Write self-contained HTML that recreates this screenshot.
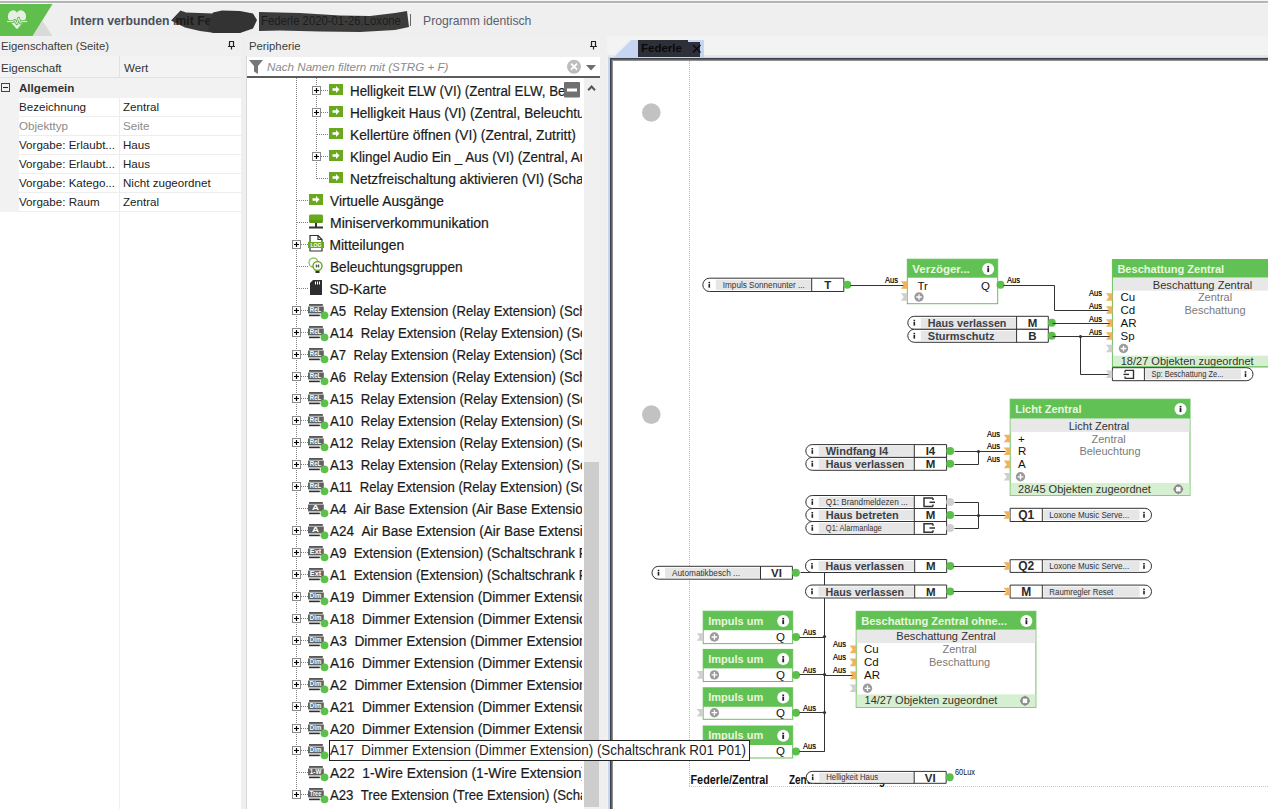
<!DOCTYPE html><html><head><meta charset="utf-8"><style>
*{margin:0;padding:0;box-sizing:border-box}
html,body{width:1268px;height:809px;overflow:hidden;background:#f0f0f0;font-family:"Liberation Sans",sans-serif;position:relative}
.a{position:absolute;white-space:nowrap}
</style></head><body>

<div class="a" style="left:0;top:0;width:1268px;height:36px;background:#efefef"></div>
<div class="a" style="left:0;top:0;width:1268px;height:1px;background:#f6f6f6"></div>
<div class="a" style="left:0;top:3px;width:1268px;height:1px;background:#f8f8f8"></div>
<div class="a" style="left:0;top:1px;width:1268px;height:2px;background:#b4b4b4"></div>
<svg class="a" style="left:0;top:0" width="120" height="40">
<polygon points="32.6,36 52.5,36 42.5,21" fill="#dadada"/>
<polygon points="0,4 52.5,4 32.6,36 0,36" fill="#60bf4c"/>
<path d="M17,29.2 L9.5,21 C7.2,18.3 7.4,13 10.8,11 C13.5,9.6 15.9,10.6 17,12.8 C18.1,10.6 20.5,9.6 23.2,11 C26.6,13 26.8,18.3 24.5,21 Z" fill="#e6efe4"/>
<polyline points="7,21.6 13,21.6 14.8,20.2 16.8,23.8 18.6,18 20.3,23.2 21.3,21.6 27.2,21.6" fill="none" stroke="#60bf4c" stroke-width="2.6" stroke-linejoin="round"/>
<polyline points="7,21.6 13,21.6 14.8,20.2 16.8,23.8 18.6,18 20.3,23.2 21.3,21.6 27.2,21.6" fill="none" stroke="#e6efe4" stroke-width="1" stroke-linejoin="round"/>
</svg>
<div class="a" style="left:70px;top:13px;font-size:12.2px;font-weight:bold;color:#4a505c;line-height:16px">Intern verbunden mit Federle</div>
<div class="a" style="left:423px;top:13px;font-size:12.2px;color:#5a6070;line-height:16px">Programm identisch</div>
<svg class="a" style="left:0;top:0" width="560" height="40">
<path d="M171,20.5 L180.5,10.5 L186,12.5 L213,13.5 L252,14 L256,20 L252,28 L240,32.5 L215,33 L200,31 L185,27.5 Z" fill="#3a3a3a"/>
<path d="M259,12 L300,13 L340,15.5 L370,16 L395,13 L407,11 L409,27 L395,30 L360,32 L320,31.5 L280,30.5 L259,31 Z" fill="#3c3c3c"/>
</svg>
<div class="a" style="left:260.5px;top:13px;font-size:12.2px;color:#1c1c1c;line-height:16px;transform:scaleX(0.93);transform-origin:0 0">Federle 2020-01-26.Loxone</div>
<div class="a" style="left:175.5px;top:13px;font-size:12.2px;font-weight:bold;color:#1c1c1c;line-height:16px">mit Federle</div>
<svg class="a" style="left:0;top:0" width="560" height="40">
<path d="M213,12.5 L222,10.5 L240,11 L253,13.5 L257,20 L253,28.5 L240,33 L213,33 L208,30 L210,20 Z" fill="#333"/>
</svg>
<div class="a" style="left:410px;top:14px;width:1px;height:12px;background:#666"></div>
<div class="a" style="left:0;top:36px;width:246px;height:773px;background:#f0f0f0"></div>
<div class="a" style="left:1px;top:38px;font-size:11.3px;color:#3c3c3c;line-height:16px">Eigenschaften (Seite)</div>
<svg class="a" style="left:227px;top:41px" width="9" height="9"><path d="M2,0.5 H7 M2.5,0.5 V5 M6.5,0.5 V5 M1,5.5 H8 M4.5,5.5 V8.5" stroke="#222" stroke-width="1.2" fill="none"/></svg>
<div class="a" style="left:0;top:56px;width:241px;height:22px;background:#f3f3f3;border-bottom:1px solid #e2e2e2"></div>
<div class="a" style="left:119px;top:56px;width:1px;height:22px;background:#e2e2e2"></div>
<div class="a" style="left:1px;top:60px;font-size:11.6px;color:#333;line-height:16px">Eigenschaft</div>
<div class="a" style="left:124px;top:60px;font-size:11.6px;color:#333;line-height:16px">Wert</div>
<div class="a" style="left:0;top:78px;width:241px;height:731px;background:#fff"></div>
<div class="a" style="left:119px;top:212px;width:1px;height:597px;background:#f0f0f0"></div>
<div class="a" style="left:0;top:78px;width:241px;height:20px;background:#f2f2f2"></div>
<svg class="a" style="left:1px;top:83px" width="10" height="10"><rect x="0.5" y="0.5" width="8" height="8" fill="none" stroke="#444"/><path d="M2,4.5 H7" stroke="#222"/></svg>
<div class="a" style="left:19px;top:80px;font-size:11.6px;font-weight:bold;color:#333;line-height:16px">Allgemein</div>
<div class="a" style="left:0;top:98px;width:19px;height:114px;background:#f2f2f2"></div>
<div class="a" style="left:19px;top:116px;width:222px;height:1px;background:#ededed"></div>
<div class="a" style="left:119px;top:98px;width:1px;height:19px;background:#ededed"></div>
<div class="a" style="left:19px;top:99px;font-size:11.6px;color:#222;line-height:16px">Bezeichnung</div>
<div class="a" style="left:123px;top:99px;font-size:11.6px;color:#222;line-height:16px">Zentral</div>
<div class="a" style="left:19px;top:135px;width:222px;height:1px;background:#ededed"></div>
<div class="a" style="left:119px;top:117px;width:1px;height:19px;background:#ededed"></div>
<div class="a" style="left:19px;top:118px;font-size:11.6px;color:#8a8a8a;line-height:16px">Objekttyp</div>
<div class="a" style="left:123px;top:118px;font-size:11.6px;color:#8a8a8a;line-height:16px">Seite</div>
<div class="a" style="left:19px;top:154px;width:222px;height:1px;background:#ededed"></div>
<div class="a" style="left:119px;top:136px;width:1px;height:19px;background:#ededed"></div>
<div class="a" style="left:19px;top:137px;font-size:11.6px;color:#222;line-height:16px">Vorgabe: Erlaubt...</div>
<div class="a" style="left:123px;top:137px;font-size:11.6px;color:#222;line-height:16px">Haus</div>
<div class="a" style="left:19px;top:173px;width:222px;height:1px;background:#ededed"></div>
<div class="a" style="left:119px;top:155px;width:1px;height:19px;background:#ededed"></div>
<div class="a" style="left:19px;top:156px;font-size:11.6px;color:#222;line-height:16px">Vorgabe: Erlaubt...</div>
<div class="a" style="left:123px;top:156px;font-size:11.6px;color:#222;line-height:16px">Haus</div>
<div class="a" style="left:19px;top:192px;width:222px;height:1px;background:#ededed"></div>
<div class="a" style="left:119px;top:174px;width:1px;height:19px;background:#ededed"></div>
<div class="a" style="left:19px;top:175px;font-size:11.6px;color:#222;line-height:16px">Vorgabe: Katego...</div>
<div class="a" style="left:123px;top:175px;font-size:11.6px;color:#222;line-height:16px">Nicht zugeordnet</div>
<div class="a" style="left:19px;top:211px;width:222px;height:1px;background:#ededed"></div>
<div class="a" style="left:119px;top:193px;width:1px;height:19px;background:#ededed"></div>
<div class="a" style="left:19px;top:194px;font-size:11.6px;color:#222;line-height:16px">Vorgabe: Raum</div>
<div class="a" style="left:123px;top:194px;font-size:11.6px;color:#222;line-height:16px">Zentral</div>
<div class="a" style="left:241px;top:36px;width:5px;height:773px;background:#efefef"></div>
<div class="a" style="left:246px;top:36px;width:361px;height:773px;background:#f0f0f0"></div>
<div class="a" style="left:249px;top:38px;font-size:11.3px;color:#3c3c3c;line-height:16px">Peripherie</div>
<svg class="a" style="left:589px;top:41px" width="9" height="9"><path d="M2,0.5 H7 M2.5,0.5 V5 M6.5,0.5 V5 M1,5.5 H8 M4.5,5.5 V8.5" stroke="#222" stroke-width="1.2" fill="none"/></svg>
<div class="a" style="left:246px;top:56px;width:1px;height:753px;background:#d9d9d9"></div>
<div class="a" style="left:247px;top:57px;width:353px;height:20px;background:#fff"></div>
<div class="a" style="left:247px;top:76px;width:353px;height:1.5px;background:#5c5c5c"></div>
<svg class="a" style="left:249px;top:60px" width="15" height="15"><path d="M0,0 H14 L9,6 V14 L5,11.5 V6 Z" fill="#777"/></svg>
<div class="a" style="left:267px;top:59px;font-size:11.6px;font-style:italic;color:#8a8a8a;line-height:16px">Nach Namen filtern mit (STRG + F)</div>
<svg class="a" style="left:566px;top:59px" width="34" height="16"><circle cx="8" cy="7.7" r="7" fill="#bdbdbd"/><path d="M5,4.7 L11,10.7 M11,4.7 L5,10.7" stroke="#fff" stroke-width="1.8"/><path d="M20,6 H30 L25,11.5 Z" fill="#6e6e6e"/></svg>
<div class="a" style="left:247px;top:78px;width:337px;height:731px;background:#fff"></div>
<div class="a" style="left:584px;top:78px;width:16px;height:731px;background:#f0f0f0"></div>
<svg class="a" style="left:587px;top:84px" width="10" height="8"><path d="M1.2,6.3 L4.6,2.6 L8,6.3" stroke="#555" stroke-width="2" fill="none"/></svg>
<div class="a" style="left:584px;top:462px;width:15px;height:345px;background:#cdcdcd"></div>
<div class="a" style="left:600px;top:36px;width:7px;height:773px;background:#efefef"></div>
<div class="a" style="left:247px;top:78px;width:335px;height:731px;overflow:hidden">
<div class="a" style="left:-247px;top:-78px;width:1268px;height:809px">
<div class="a" style="left:296px;top:78px;width:1px;height:717px;background:repeating-linear-gradient(180deg,#808080 0 1px,transparent 1px 2px)"></div>
<div class="a" style="left:316px;top:78px;width:1px;height:101px;background:repeating-linear-gradient(180deg,#808080 0 1px,transparent 1px 2px)"></div>
<div class="a" style="left:317px;top:90px;width:12px;height:1px;background:repeating-linear-gradient(90deg,#808080 0 1px,transparent 1px 2px)"></div>
<svg class="a" style="left:312px;top:86px" width="10" height="10"><rect x="0.5" y="0.5" width="8" height="8" fill="#fff" stroke="#8a8a8a"/><path d="M2,4.5 H7 M4.5,2 V7" stroke="#000" stroke-width="1.2"/></svg>
<svg class="a" style="left:329px;top:84px" width="14" height="11"><rect x="0" y="0" width="14" height="11" fill="#6aa81e"/><path d="M3.5,4.2 H7 V2 L10.5,5.5 L7,9 V6.8 H3.5 Z" fill="#fff"/></svg>
<div class="a" style="left:349.5px;top:79.6px;font-size:13.85px;line-height:22px;color:#1a1a1a;-webkit-text-stroke:0.2px #1a1a1a;transform:scaleX(0.965);transform-origin:0 0">Helligkeit ELW (VI) (Zentral ELW, Beleuchtung)</div>
<div class="a" style="left:317px;top:112px;width:12px;height:1px;background:repeating-linear-gradient(90deg,#808080 0 1px,transparent 1px 2px)"></div>
<svg class="a" style="left:312px;top:108px" width="10" height="10"><rect x="0.5" y="0.5" width="8" height="8" fill="#fff" stroke="#8a8a8a"/><path d="M2,4.5 H7 M4.5,2 V7" stroke="#000" stroke-width="1.2"/></svg>
<svg class="a" style="left:329px;top:106px" width="14" height="11"><rect x="0" y="0" width="14" height="11" fill="#6aa81e"/><path d="M3.5,4.2 H7 V2 L10.5,5.5 L7,9 V6.8 H3.5 Z" fill="#fff"/></svg>
<div class="a" style="left:349.5px;top:101.6px;font-size:13.85px;line-height:22px;color:#1a1a1a;-webkit-text-stroke:0.2px #1a1a1a;transform:scaleX(0.98);transform-origin:0 0">Helligkeit Haus (VI) (Zentral, Beleuchtung)</div>
<div class="a" style="left:317px;top:134px;width:12px;height:1px;background:repeating-linear-gradient(90deg,#808080 0 1px,transparent 1px 2px)"></div>
<svg class="a" style="left:329px;top:128px" width="14" height="11"><rect x="0" y="0" width="14" height="11" fill="#6aa81e"/><path d="M3.5,4.2 H7 V2 L10.5,5.5 L7,9 V6.8 H3.5 Z" fill="#fff"/></svg>
<div class="a" style="left:349.5px;top:123.6px;font-size:13.85px;line-height:22px;color:#1a1a1a;-webkit-text-stroke:0.2px #1a1a1a;transform:scaleX(0.996);transform-origin:0 0">Kellertüre öffnen (VI) (Zentral, Zutritt)</div>
<div class="a" style="left:317px;top:156px;width:12px;height:1px;background:repeating-linear-gradient(90deg,#808080 0 1px,transparent 1px 2px)"></div>
<svg class="a" style="left:312px;top:152px" width="10" height="10"><rect x="0.5" y="0.5" width="8" height="8" fill="#fff" stroke="#8a8a8a"/><path d="M2,4.5 H7 M4.5,2 V7" stroke="#000" stroke-width="1.2"/></svg>
<svg class="a" style="left:329px;top:150px" width="14" height="11"><rect x="0" y="0" width="14" height="11" fill="#6aa81e"/><path d="M3.5,4.2 H7 V2 L10.5,5.5 L7,9 V6.8 H3.5 Z" fill="#fff"/></svg>
<div class="a" style="left:349.5px;top:145.6px;font-size:13.85px;line-height:22px;color:#1a1a1a;-webkit-text-stroke:0.2px #1a1a1a;transform:scaleX(0.973);transform-origin:0 0">Klingel Audio Ein _ Aus (VI) (Zentral, Audio)</div>
<div class="a" style="left:317px;top:178px;width:12px;height:1px;background:repeating-linear-gradient(90deg,#808080 0 1px,transparent 1px 2px)"></div>
<svg class="a" style="left:329px;top:172px" width="14" height="11"><rect x="0" y="0" width="14" height="11" fill="#6aa81e"/><path d="M3.5,4.2 H7 V2 L10.5,5.5 L7,9 V6.8 H3.5 Z" fill="#fff"/></svg>
<div class="a" style="left:349.5px;top:167.6px;font-size:13.85px;line-height:22px;color:#1a1a1a;-webkit-text-stroke:0.2px #1a1a1a;transform:scaleX(0.989);transform-origin:0 0">Netzfreischaltung aktivieren (VI) (Schaltschrank)</div>
<div class="a" style="left:297px;top:200px;width:12px;height:1px;background:repeating-linear-gradient(90deg,#808080 0 1px,transparent 1px 2px)"></div>
<svg class="a" style="left:309px;top:194px" width="14" height="11"><rect x="0" y="0" width="14" height="11" fill="#6aa81e"/><path d="M3.5,4.2 H7 V2 L10.5,5.5 L7,9 V6.8 H3.5 Z" fill="#fff"/></svg>
<div class="a" style="left:329.5px;top:189.6px;font-size:13.85px;line-height:22px;color:#1a1a1a;-webkit-text-stroke:0.2px #1a1a1a;transform:scaleX(0.989);transform-origin:0 0">Virtuelle Ausgänge</div>
<div class="a" style="left:297px;top:222px;width:12px;height:1px;background:repeating-linear-gradient(90deg,#808080 0 1px,transparent 1px 2px)"></div>
<svg class="a" style="left:309px;top:214px" width="15" height="16"><rect x="0" y="0.5" width="14" height="8" rx="1.5" fill="#6aa81e"/><rect x="0.5" y="6" width="13" height="3" fill="#5a9618"/><rect x="6" y="9" width="2" height="4" fill="#333"/><rect x="0" y="12.5" width="14" height="2" fill="#333"/></svg>
<div class="a" style="left:329.5px;top:211.6px;font-size:13.85px;line-height:22px;color:#1a1a1a;-webkit-text-stroke:0.2px #1a1a1a;transform:scaleX(1.012);transform-origin:0 0">Miniserverkommunikation</div>
<div class="a" style="left:297px;top:244px;width:12px;height:1px;background:repeating-linear-gradient(90deg,#808080 0 1px,transparent 1px 2px)"></div>
<svg class="a" style="left:292px;top:240px" width="10" height="10"><rect x="0.5" y="0.5" width="8" height="8" fill="#fff" stroke="#8a8a8a"/><path d="M2,4.5 H7 M4.5,2 V7" stroke="#000" stroke-width="1.2"/></svg>
<svg class="a" style="left:308px;top:235px" width="16" height="17"><path d="M2,0.5 H10 L14,4.5 V16 H2 Z" fill="#fff" stroke="#333" stroke-width="1.2"/><path d="M10,0.5 V4.5 H14" fill="none" stroke="#333" stroke-width="1.2"/><rect x="0" y="7" width="16" height="6" fill="#6aa81e"/><text x="8" y="12" font-family='"Liberation Sans", sans-serif' font-size="5.5" font-weight="bold" fill="#fff" text-anchor="middle" textLength="11" lengthAdjust="spacingAndGlyphs">LOG</text></svg>
<div class="a" style="left:329.5px;top:233.6px;font-size:13.85px;line-height:22px;color:#1a1a1a;-webkit-text-stroke:0.2px #1a1a1a;transform:scaleX(1.0);transform-origin:0 0">Mitteilungen</div>
<div class="a" style="left:297px;top:266px;width:12px;height:1px;background:repeating-linear-gradient(90deg,#808080 0 1px,transparent 1px 2px)"></div>
<svg class="a" style="left:308px;top:257px" width="16" height="17"><circle cx="5.5" cy="5.5" r="4.5" fill="none" stroke="#8cc060" stroke-width="1.3"/><circle cx="9.5" cy="9" r="4.5" fill="#fff" stroke="#6aa81e" stroke-width="1.4"/><rect x="7.5" y="14" width="4" height="2" fill="#333"/><path d="M8.3,7.5 V10.5 M10.7,7.5 V10.5 M8.3,9 H10.7" stroke="#333" stroke-width="0.9"/></svg>
<div class="a" style="left:329.5px;top:255.6px;font-size:13.85px;line-height:22px;color:#1a1a1a;-webkit-text-stroke:0.2px #1a1a1a;transform:scaleX(0.984);transform-origin:0 0">Beleuchtungsgruppen</div>
<div class="a" style="left:297px;top:288px;width:12px;height:1px;background:repeating-linear-gradient(90deg,#808080 0 1px,transparent 1px 2px)"></div>
<svg class="a" style="left:310px;top:280px" width="13" height="16"><path d="M3,0 H12 V15 H0 V3 Z" fill="#2e2e2e"/><path d="M5.5,1.5 V4.5 M7.5,1.5 V4.5 M9.5,1.5 V4.5" stroke="#fff" stroke-width="1"/></svg>
<div class="a" style="left:329.5px;top:277.6px;font-size:13.85px;line-height:22px;color:#1a1a1a;-webkit-text-stroke:0.2px #1a1a1a;transform:scaleX(1.0);transform-origin:0 0">SD-Karte</div>
<div class="a" style="left:301px;top:310px;width:8px;height:1px;background:repeating-linear-gradient(90deg,#808080 0 1px,transparent 1px 2px)"></div>
<svg class="a" style="left:292px;top:306px" width="10" height="10"><rect x="0.5" y="0.5" width="8" height="8" fill="#fff" stroke="#8a8a8a"/><path d="M2,4.5 H7 M4.5,2 V7" stroke="#000" stroke-width="1.2"/></svg>
<svg class="a" style="left:308px;top:303px" width="21" height="17"><rect x="1" y="1.2" width="13.8" height="1.5" fill="#2e2e2e"/><rect x="0" y="3.5" width="15.8" height="6.9" fill="#626262"/><text x="7.6" y="9.3" font-family='"Liberation Sans", sans-serif' font-size="7" font-weight="bold" fill="#fff" text-anchor="middle" textLength="11.5" lengthAdjust="spacingAndGlyphs">ReL</text><rect x="1" y="11.6" width="10.8" height="1.6" fill="#2e2e2e"/><circle cx="16.5" cy="12.3" r="3.9" fill="#5cc04c"/></svg>
<div class="a" style="left:329.5px;top:299.6px;font-size:13.85px;line-height:22px;color:#1a1a1a;-webkit-text-stroke:0.2px #1a1a1a;transform:scaleX(0.95);transform-origin:0 0">A5&nbsp;&nbsp;Relay Extension (Relay Extension) (Schaltschrank R01 P01)</div>
<div class="a" style="left:301px;top:332px;width:8px;height:1px;background:repeating-linear-gradient(90deg,#808080 0 1px,transparent 1px 2px)"></div>
<svg class="a" style="left:292px;top:328px" width="10" height="10"><rect x="0.5" y="0.5" width="8" height="8" fill="#fff" stroke="#8a8a8a"/><path d="M2,4.5 H7 M4.5,2 V7" stroke="#000" stroke-width="1.2"/></svg>
<svg class="a" style="left:308px;top:325px" width="21" height="17"><rect x="1" y="1.2" width="13.8" height="1.5" fill="#2e2e2e"/><rect x="0" y="3.5" width="15.8" height="6.9" fill="#626262"/><text x="7.6" y="9.3" font-family='"Liberation Sans", sans-serif' font-size="7" font-weight="bold" fill="#fff" text-anchor="middle" textLength="11.5" lengthAdjust="spacingAndGlyphs">ReL</text><rect x="1" y="11.6" width="10.8" height="1.6" fill="#2e2e2e"/><circle cx="16.5" cy="12.3" r="3.9" fill="#5cc04c"/></svg>
<div class="a" style="left:329.5px;top:321.6px;font-size:13.85px;line-height:22px;color:#1a1a1a;-webkit-text-stroke:0.2px #1a1a1a;transform:scaleX(0.95);transform-origin:0 0">A14&nbsp;&nbsp;Relay Extension (Relay Extension) (Schaltschrank R01 P01)</div>
<div class="a" style="left:301px;top:354px;width:8px;height:1px;background:repeating-linear-gradient(90deg,#808080 0 1px,transparent 1px 2px)"></div>
<svg class="a" style="left:292px;top:350px" width="10" height="10"><rect x="0.5" y="0.5" width="8" height="8" fill="#fff" stroke="#8a8a8a"/><path d="M2,4.5 H7 M4.5,2 V7" stroke="#000" stroke-width="1.2"/></svg>
<svg class="a" style="left:308px;top:347px" width="21" height="17"><rect x="1" y="1.2" width="13.8" height="1.5" fill="#2e2e2e"/><rect x="0" y="3.5" width="15.8" height="6.9" fill="#626262"/><text x="7.6" y="9.3" font-family='"Liberation Sans", sans-serif' font-size="7" font-weight="bold" fill="#fff" text-anchor="middle" textLength="11.5" lengthAdjust="spacingAndGlyphs">ReL</text><rect x="1" y="11.6" width="10.8" height="1.6" fill="#2e2e2e"/><circle cx="16.5" cy="12.3" r="3.9" fill="#5cc04c"/></svg>
<div class="a" style="left:329.5px;top:343.6px;font-size:13.85px;line-height:22px;color:#1a1a1a;-webkit-text-stroke:0.2px #1a1a1a;transform:scaleX(0.95);transform-origin:0 0">A7&nbsp;&nbsp;Relay Extension (Relay Extension) (Schaltschrank R01 P01)</div>
<div class="a" style="left:301px;top:376px;width:8px;height:1px;background:repeating-linear-gradient(90deg,#808080 0 1px,transparent 1px 2px)"></div>
<svg class="a" style="left:292px;top:372px" width="10" height="10"><rect x="0.5" y="0.5" width="8" height="8" fill="#fff" stroke="#8a8a8a"/><path d="M2,4.5 H7 M4.5,2 V7" stroke="#000" stroke-width="1.2"/></svg>
<svg class="a" style="left:308px;top:369px" width="21" height="17"><rect x="1" y="1.2" width="13.8" height="1.5" fill="#2e2e2e"/><rect x="0" y="3.5" width="15.8" height="6.9" fill="#626262"/><text x="7.6" y="9.3" font-family='"Liberation Sans", sans-serif' font-size="7" font-weight="bold" fill="#fff" text-anchor="middle" textLength="11.5" lengthAdjust="spacingAndGlyphs">ReL</text><rect x="1" y="11.6" width="10.8" height="1.6" fill="#2e2e2e"/><circle cx="16.5" cy="12.3" r="3.9" fill="#5cc04c"/></svg>
<div class="a" style="left:329.5px;top:365.6px;font-size:13.85px;line-height:22px;color:#1a1a1a;-webkit-text-stroke:0.2px #1a1a1a;transform:scaleX(0.95);transform-origin:0 0">A6&nbsp;&nbsp;Relay Extension (Relay Extension) (Schaltschrank R01 P01)</div>
<div class="a" style="left:301px;top:398px;width:8px;height:1px;background:repeating-linear-gradient(90deg,#808080 0 1px,transparent 1px 2px)"></div>
<svg class="a" style="left:292px;top:394px" width="10" height="10"><rect x="0.5" y="0.5" width="8" height="8" fill="#fff" stroke="#8a8a8a"/><path d="M2,4.5 H7 M4.5,2 V7" stroke="#000" stroke-width="1.2"/></svg>
<svg class="a" style="left:308px;top:391px" width="21" height="17"><rect x="1" y="1.2" width="13.8" height="1.5" fill="#2e2e2e"/><rect x="0" y="3.5" width="15.8" height="6.9" fill="#626262"/><text x="7.6" y="9.3" font-family='"Liberation Sans", sans-serif' font-size="7" font-weight="bold" fill="#fff" text-anchor="middle" textLength="11.5" lengthAdjust="spacingAndGlyphs">ReL</text><rect x="1" y="11.6" width="10.8" height="1.6" fill="#2e2e2e"/><circle cx="16.5" cy="12.3" r="3.9" fill="#5cc04c"/></svg>
<div class="a" style="left:329.5px;top:387.6px;font-size:13.85px;line-height:22px;color:#1a1a1a;-webkit-text-stroke:0.2px #1a1a1a;transform:scaleX(0.95);transform-origin:0 0">A15&nbsp;&nbsp;Relay Extension (Relay Extension) (Schaltschrank R01 P01)</div>
<div class="a" style="left:301px;top:420px;width:8px;height:1px;background:repeating-linear-gradient(90deg,#808080 0 1px,transparent 1px 2px)"></div>
<svg class="a" style="left:292px;top:416px" width="10" height="10"><rect x="0.5" y="0.5" width="8" height="8" fill="#fff" stroke="#8a8a8a"/><path d="M2,4.5 H7 M4.5,2 V7" stroke="#000" stroke-width="1.2"/></svg>
<svg class="a" style="left:308px;top:413px" width="21" height="17"><rect x="1" y="1.2" width="13.8" height="1.5" fill="#2e2e2e"/><rect x="0" y="3.5" width="15.8" height="6.9" fill="#626262"/><text x="7.6" y="9.3" font-family='"Liberation Sans", sans-serif' font-size="7" font-weight="bold" fill="#fff" text-anchor="middle" textLength="11.5" lengthAdjust="spacingAndGlyphs">ReL</text><rect x="1" y="11.6" width="10.8" height="1.6" fill="#2e2e2e"/><circle cx="16.5" cy="12.3" r="3.9" fill="#5cc04c"/></svg>
<div class="a" style="left:329.5px;top:409.6px;font-size:13.85px;line-height:22px;color:#1a1a1a;-webkit-text-stroke:0.2px #1a1a1a;transform:scaleX(0.95);transform-origin:0 0">A10&nbsp;&nbsp;Relay Extension (Relay Extension) (Schaltschrank R01 P01)</div>
<div class="a" style="left:301px;top:442px;width:8px;height:1px;background:repeating-linear-gradient(90deg,#808080 0 1px,transparent 1px 2px)"></div>
<svg class="a" style="left:292px;top:438px" width="10" height="10"><rect x="0.5" y="0.5" width="8" height="8" fill="#fff" stroke="#8a8a8a"/><path d="M2,4.5 H7 M4.5,2 V7" stroke="#000" stroke-width="1.2"/></svg>
<svg class="a" style="left:308px;top:435px" width="21" height="17"><rect x="1" y="1.2" width="13.8" height="1.5" fill="#2e2e2e"/><rect x="0" y="3.5" width="15.8" height="6.9" fill="#626262"/><text x="7.6" y="9.3" font-family='"Liberation Sans", sans-serif' font-size="7" font-weight="bold" fill="#fff" text-anchor="middle" textLength="11.5" lengthAdjust="spacingAndGlyphs">ReL</text><rect x="1" y="11.6" width="10.8" height="1.6" fill="#2e2e2e"/><circle cx="16.5" cy="12.3" r="3.9" fill="#5cc04c"/></svg>
<div class="a" style="left:329.5px;top:431.6px;font-size:13.85px;line-height:22px;color:#1a1a1a;-webkit-text-stroke:0.2px #1a1a1a;transform:scaleX(0.95);transform-origin:0 0">A12&nbsp;&nbsp;Relay Extension (Relay Extension) (Schaltschrank R01 P01)</div>
<div class="a" style="left:301px;top:464px;width:8px;height:1px;background:repeating-linear-gradient(90deg,#808080 0 1px,transparent 1px 2px)"></div>
<svg class="a" style="left:292px;top:460px" width="10" height="10"><rect x="0.5" y="0.5" width="8" height="8" fill="#fff" stroke="#8a8a8a"/><path d="M2,4.5 H7 M4.5,2 V7" stroke="#000" stroke-width="1.2"/></svg>
<svg class="a" style="left:308px;top:457px" width="21" height="17"><rect x="1" y="1.2" width="13.8" height="1.5" fill="#2e2e2e"/><rect x="0" y="3.5" width="15.8" height="6.9" fill="#626262"/><text x="7.6" y="9.3" font-family='"Liberation Sans", sans-serif' font-size="7" font-weight="bold" fill="#fff" text-anchor="middle" textLength="11.5" lengthAdjust="spacingAndGlyphs">ReL</text><rect x="1" y="11.6" width="10.8" height="1.6" fill="#2e2e2e"/><circle cx="16.5" cy="12.3" r="3.9" fill="#5cc04c"/></svg>
<div class="a" style="left:329.5px;top:453.6px;font-size:13.85px;line-height:22px;color:#1a1a1a;-webkit-text-stroke:0.2px #1a1a1a;transform:scaleX(0.95);transform-origin:0 0">A13&nbsp;&nbsp;Relay Extension (Relay Extension) (Schaltschrank R01 P01)</div>
<div class="a" style="left:301px;top:486px;width:8px;height:1px;background:repeating-linear-gradient(90deg,#808080 0 1px,transparent 1px 2px)"></div>
<svg class="a" style="left:292px;top:482px" width="10" height="10"><rect x="0.5" y="0.5" width="8" height="8" fill="#fff" stroke="#8a8a8a"/><path d="M2,4.5 H7 M4.5,2 V7" stroke="#000" stroke-width="1.2"/></svg>
<svg class="a" style="left:308px;top:479px" width="21" height="17"><rect x="1" y="1.2" width="13.8" height="1.5" fill="#2e2e2e"/><rect x="0" y="3.5" width="15.8" height="6.9" fill="#626262"/><text x="7.6" y="9.3" font-family='"Liberation Sans", sans-serif' font-size="7" font-weight="bold" fill="#fff" text-anchor="middle" textLength="11.5" lengthAdjust="spacingAndGlyphs">ReL</text><rect x="1" y="11.6" width="10.8" height="1.6" fill="#2e2e2e"/><circle cx="16.5" cy="12.3" r="3.9" fill="#5cc04c"/></svg>
<div class="a" style="left:329.5px;top:475.6px;font-size:13.85px;line-height:22px;color:#1a1a1a;-webkit-text-stroke:0.2px #1a1a1a;transform:scaleX(0.95);transform-origin:0 0">A11&nbsp;&nbsp;Relay Extension (Relay Extension) (Schaltschrank R01 P01)</div>
<div class="a" style="left:297px;top:508px;width:12px;height:1px;background:repeating-linear-gradient(90deg,#808080 0 1px,transparent 1px 2px)"></div>
<svg class="a" style="left:308px;top:501px" width="21" height="17"><rect x="1" y="1.2" width="13.8" height="1.5" fill="#2e2e2e"/><rect x="0" y="3.5" width="15.8" height="6.9" fill="#626262"/><text x="7.6" y="9.3" font-family='"Liberation Sans", sans-serif' font-size="7" font-weight="bold" fill="#fff" text-anchor="middle" textLength="7" lengthAdjust="spacingAndGlyphs">A</text><rect x="1" y="11.6" width="10.8" height="1.6" fill="#2e2e2e"/><circle cx="16.5" cy="12.3" r="3.9" fill="#5cc04c"/></svg>
<div class="a" style="left:329.5px;top:497.6px;font-size:13.85px;line-height:22px;color:#1a1a1a;-webkit-text-stroke:0.2px #1a1a1a;transform:scaleX(0.975);transform-origin:0 0">A4&nbsp;&nbsp;Air Base Extension (Air Base Extension) (Schaltschrank)</div>
<div class="a" style="left:301px;top:530px;width:8px;height:1px;background:repeating-linear-gradient(90deg,#808080 0 1px,transparent 1px 2px)"></div>
<svg class="a" style="left:292px;top:526px" width="10" height="10"><rect x="0.5" y="0.5" width="8" height="8" fill="#fff" stroke="#8a8a8a"/><path d="M2,4.5 H7 M4.5,2 V7" stroke="#000" stroke-width="1.2"/></svg>
<svg class="a" style="left:308px;top:523px" width="21" height="17"><rect x="1" y="1.2" width="13.8" height="1.5" fill="#2e2e2e"/><rect x="0" y="3.5" width="15.8" height="6.9" fill="#626262"/><text x="7.6" y="9.3" font-family='"Liberation Sans", sans-serif' font-size="7" font-weight="bold" fill="#fff" text-anchor="middle" textLength="7" lengthAdjust="spacingAndGlyphs">A</text><rect x="1" y="11.6" width="10.8" height="1.6" fill="#2e2e2e"/><circle cx="16.5" cy="12.3" r="3.9" fill="#5cc04c"/></svg>
<div class="a" style="left:329.5px;top:519.6px;font-size:13.85px;line-height:22px;color:#1a1a1a;-webkit-text-stroke:0.2px #1a1a1a;transform:scaleX(0.975);transform-origin:0 0">A24&nbsp;&nbsp;Air Base Extension (Air Base Extension) (Schaltschrank)</div>
<div class="a" style="left:301px;top:552px;width:8px;height:1px;background:repeating-linear-gradient(90deg,#808080 0 1px,transparent 1px 2px)"></div>
<svg class="a" style="left:292px;top:548px" width="10" height="10"><rect x="0.5" y="0.5" width="8" height="8" fill="#fff" stroke="#8a8a8a"/><path d="M2,4.5 H7 M4.5,2 V7" stroke="#000" stroke-width="1.2"/></svg>
<svg class="a" style="left:308px;top:545px" width="21" height="17"><rect x="1" y="1.2" width="13.8" height="1.5" fill="#2e2e2e"/><rect x="0" y="3.5" width="15.8" height="6.9" fill="#626262"/><text x="7.6" y="9.3" font-family='"Liberation Sans", sans-serif' font-size="7" font-weight="bold" fill="#fff" text-anchor="middle" textLength="11.5" lengthAdjust="spacingAndGlyphs">Ext</text><rect x="1" y="11.6" width="10.8" height="1.6" fill="#2e2e2e"/><circle cx="16.5" cy="12.3" r="3.9" fill="#5cc04c"/></svg>
<div class="a" style="left:329.5px;top:541.6px;font-size:13.85px;line-height:22px;color:#1a1a1a;-webkit-text-stroke:0.2px #1a1a1a;transform:scaleX(0.962);transform-origin:0 0">A9&nbsp;&nbsp;Extension (Extension) (Schaltschrank R01 P01)</div>
<div class="a" style="left:301px;top:574px;width:8px;height:1px;background:repeating-linear-gradient(90deg,#808080 0 1px,transparent 1px 2px)"></div>
<svg class="a" style="left:292px;top:570px" width="10" height="10"><rect x="0.5" y="0.5" width="8" height="8" fill="#fff" stroke="#8a8a8a"/><path d="M2,4.5 H7 M4.5,2 V7" stroke="#000" stroke-width="1.2"/></svg>
<svg class="a" style="left:308px;top:567px" width="21" height="17"><rect x="1" y="1.2" width="13.8" height="1.5" fill="#2e2e2e"/><rect x="0" y="3.5" width="15.8" height="6.9" fill="#626262"/><text x="7.6" y="9.3" font-family='"Liberation Sans", sans-serif' font-size="7" font-weight="bold" fill="#fff" text-anchor="middle" textLength="11.5" lengthAdjust="spacingAndGlyphs">Ext</text><rect x="1" y="11.6" width="10.8" height="1.6" fill="#2e2e2e"/><circle cx="16.5" cy="12.3" r="3.9" fill="#5cc04c"/></svg>
<div class="a" style="left:329.5px;top:563.6px;font-size:13.85px;line-height:22px;color:#1a1a1a;-webkit-text-stroke:0.2px #1a1a1a;transform:scaleX(0.962);transform-origin:0 0">A1&nbsp;&nbsp;Extension (Extension) (Schaltschrank R01 P01)</div>
<div class="a" style="left:301px;top:596px;width:8px;height:1px;background:repeating-linear-gradient(90deg,#808080 0 1px,transparent 1px 2px)"></div>
<svg class="a" style="left:292px;top:592px" width="10" height="10"><rect x="0.5" y="0.5" width="8" height="8" fill="#fff" stroke="#8a8a8a"/><path d="M2,4.5 H7 M4.5,2 V7" stroke="#000" stroke-width="1.2"/></svg>
<svg class="a" style="left:308px;top:589px" width="21" height="17"><rect x="1" y="1.2" width="13.8" height="1.5" fill="#2e2e2e"/><rect x="0" y="3.5" width="15.8" height="6.9" fill="#626262"/><text x="7.6" y="9.3" font-family='"Liberation Sans", sans-serif' font-size="7" font-weight="bold" fill="#fff" text-anchor="middle" textLength="11.5" lengthAdjust="spacingAndGlyphs">Dim</text><rect x="1" y="11.6" width="10.8" height="1.6" fill="#2e2e2e"/><circle cx="16.5" cy="12.3" r="3.9" fill="#5cc04c"/></svg>
<div class="a" style="left:329.5px;top:585.6px;font-size:13.85px;line-height:22px;color:#1a1a1a;-webkit-text-stroke:0.2px #1a1a1a;transform:scaleX(0.99);transform-origin:0 0">A19&nbsp;&nbsp;Dimmer Extension (Dimmer Extension) (Schaltschrank R01 P01)</div>
<div class="a" style="left:301px;top:618px;width:8px;height:1px;background:repeating-linear-gradient(90deg,#808080 0 1px,transparent 1px 2px)"></div>
<svg class="a" style="left:292px;top:614px" width="10" height="10"><rect x="0.5" y="0.5" width="8" height="8" fill="#fff" stroke="#8a8a8a"/><path d="M2,4.5 H7 M4.5,2 V7" stroke="#000" stroke-width="1.2"/></svg>
<svg class="a" style="left:308px;top:611px" width="21" height="17"><rect x="1" y="1.2" width="13.8" height="1.5" fill="#2e2e2e"/><rect x="0" y="3.5" width="15.8" height="6.9" fill="#626262"/><text x="7.6" y="9.3" font-family='"Liberation Sans", sans-serif' font-size="7" font-weight="bold" fill="#fff" text-anchor="middle" textLength="11.5" lengthAdjust="spacingAndGlyphs">Dim</text><rect x="1" y="11.6" width="10.8" height="1.6" fill="#2e2e2e"/><circle cx="16.5" cy="12.3" r="3.9" fill="#5cc04c"/></svg>
<div class="a" style="left:329.5px;top:607.6px;font-size:13.85px;line-height:22px;color:#1a1a1a;-webkit-text-stroke:0.2px #1a1a1a;transform:scaleX(0.99);transform-origin:0 0">A18&nbsp;&nbsp;Dimmer Extension (Dimmer Extension) (Schaltschrank R01 P01)</div>
<div class="a" style="left:301px;top:640px;width:8px;height:1px;background:repeating-linear-gradient(90deg,#808080 0 1px,transparent 1px 2px)"></div>
<svg class="a" style="left:292px;top:636px" width="10" height="10"><rect x="0.5" y="0.5" width="8" height="8" fill="#fff" stroke="#8a8a8a"/><path d="M2,4.5 H7 M4.5,2 V7" stroke="#000" stroke-width="1.2"/></svg>
<svg class="a" style="left:308px;top:633px" width="21" height="17"><rect x="1" y="1.2" width="13.8" height="1.5" fill="#2e2e2e"/><rect x="0" y="3.5" width="15.8" height="6.9" fill="#626262"/><text x="7.6" y="9.3" font-family='"Liberation Sans", sans-serif' font-size="7" font-weight="bold" fill="#fff" text-anchor="middle" textLength="11.5" lengthAdjust="spacingAndGlyphs">Dim</text><rect x="1" y="11.6" width="10.8" height="1.6" fill="#2e2e2e"/><circle cx="16.5" cy="12.3" r="3.9" fill="#5cc04c"/></svg>
<div class="a" style="left:329.5px;top:629.6px;font-size:13.85px;line-height:22px;color:#1a1a1a;-webkit-text-stroke:0.2px #1a1a1a;transform:scaleX(0.99);transform-origin:0 0">A3&nbsp;&nbsp;Dimmer Extension (Dimmer Extension) (Schaltschrank R01 P01)</div>
<div class="a" style="left:301px;top:662px;width:8px;height:1px;background:repeating-linear-gradient(90deg,#808080 0 1px,transparent 1px 2px)"></div>
<svg class="a" style="left:292px;top:658px" width="10" height="10"><rect x="0.5" y="0.5" width="8" height="8" fill="#fff" stroke="#8a8a8a"/><path d="M2,4.5 H7 M4.5,2 V7" stroke="#000" stroke-width="1.2"/></svg>
<svg class="a" style="left:308px;top:655px" width="21" height="17"><rect x="1" y="1.2" width="13.8" height="1.5" fill="#2e2e2e"/><rect x="0" y="3.5" width="15.8" height="6.9" fill="#626262"/><text x="7.6" y="9.3" font-family='"Liberation Sans", sans-serif' font-size="7" font-weight="bold" fill="#fff" text-anchor="middle" textLength="11.5" lengthAdjust="spacingAndGlyphs">Dim</text><rect x="1" y="11.6" width="10.8" height="1.6" fill="#2e2e2e"/><circle cx="16.5" cy="12.3" r="3.9" fill="#5cc04c"/></svg>
<div class="a" style="left:329.5px;top:651.6px;font-size:13.85px;line-height:22px;color:#1a1a1a;-webkit-text-stroke:0.2px #1a1a1a;transform:scaleX(0.99);transform-origin:0 0">A16&nbsp;&nbsp;Dimmer Extension (Dimmer Extension) (Schaltschrank R01 P01)</div>
<div class="a" style="left:301px;top:684px;width:8px;height:1px;background:repeating-linear-gradient(90deg,#808080 0 1px,transparent 1px 2px)"></div>
<svg class="a" style="left:292px;top:680px" width="10" height="10"><rect x="0.5" y="0.5" width="8" height="8" fill="#fff" stroke="#8a8a8a"/><path d="M2,4.5 H7 M4.5,2 V7" stroke="#000" stroke-width="1.2"/></svg>
<svg class="a" style="left:308px;top:677px" width="21" height="17"><rect x="1" y="1.2" width="13.8" height="1.5" fill="#2e2e2e"/><rect x="0" y="3.5" width="15.8" height="6.9" fill="#626262"/><text x="7.6" y="9.3" font-family='"Liberation Sans", sans-serif' font-size="7" font-weight="bold" fill="#fff" text-anchor="middle" textLength="11.5" lengthAdjust="spacingAndGlyphs">Dim</text><rect x="1" y="11.6" width="10.8" height="1.6" fill="#2e2e2e"/><circle cx="16.5" cy="12.3" r="3.9" fill="#5cc04c"/></svg>
<div class="a" style="left:329.5px;top:673.6px;font-size:13.85px;line-height:22px;color:#1a1a1a;-webkit-text-stroke:0.2px #1a1a1a;transform:scaleX(0.99);transform-origin:0 0">A2&nbsp;&nbsp;Dimmer Extension (Dimmer Extension) (Schaltschrank R01 P01)</div>
<div class="a" style="left:301px;top:706px;width:8px;height:1px;background:repeating-linear-gradient(90deg,#808080 0 1px,transparent 1px 2px)"></div>
<svg class="a" style="left:292px;top:702px" width="10" height="10"><rect x="0.5" y="0.5" width="8" height="8" fill="#fff" stroke="#8a8a8a"/><path d="M2,4.5 H7 M4.5,2 V7" stroke="#000" stroke-width="1.2"/></svg>
<svg class="a" style="left:308px;top:699px" width="21" height="17"><rect x="1" y="1.2" width="13.8" height="1.5" fill="#2e2e2e"/><rect x="0" y="3.5" width="15.8" height="6.9" fill="#626262"/><text x="7.6" y="9.3" font-family='"Liberation Sans", sans-serif' font-size="7" font-weight="bold" fill="#fff" text-anchor="middle" textLength="11.5" lengthAdjust="spacingAndGlyphs">Dim</text><rect x="1" y="11.6" width="10.8" height="1.6" fill="#2e2e2e"/><circle cx="16.5" cy="12.3" r="3.9" fill="#5cc04c"/></svg>
<div class="a" style="left:329.5px;top:695.6px;font-size:13.85px;line-height:22px;color:#1a1a1a;-webkit-text-stroke:0.2px #1a1a1a;transform:scaleX(0.99);transform-origin:0 0">A21&nbsp;&nbsp;Dimmer Extension (Dimmer Extension) (Schaltschrank R01 P01)</div>
<div class="a" style="left:301px;top:728px;width:8px;height:1px;background:repeating-linear-gradient(90deg,#808080 0 1px,transparent 1px 2px)"></div>
<svg class="a" style="left:292px;top:724px" width="10" height="10"><rect x="0.5" y="0.5" width="8" height="8" fill="#fff" stroke="#8a8a8a"/><path d="M2,4.5 H7 M4.5,2 V7" stroke="#000" stroke-width="1.2"/></svg>
<svg class="a" style="left:308px;top:721px" width="21" height="17"><rect x="1" y="1.2" width="13.8" height="1.5" fill="#2e2e2e"/><rect x="0" y="3.5" width="15.8" height="6.9" fill="#626262"/><text x="7.6" y="9.3" font-family='"Liberation Sans", sans-serif' font-size="7" font-weight="bold" fill="#fff" text-anchor="middle" textLength="11.5" lengthAdjust="spacingAndGlyphs">Dim</text><rect x="1" y="11.6" width="10.8" height="1.6" fill="#2e2e2e"/><circle cx="16.5" cy="12.3" r="3.9" fill="#5cc04c"/></svg>
<div class="a" style="left:329.5px;top:717.6px;font-size:13.85px;line-height:22px;color:#1a1a1a;-webkit-text-stroke:0.2px #1a1a1a;transform:scaleX(0.99);transform-origin:0 0">A20&nbsp;&nbsp;Dimmer Extension (Dimmer Extension) (Schaltschrank R01 P01)</div>
<div class="a" style="left:301px;top:750px;width:8px;height:1px;background:repeating-linear-gradient(90deg,#808080 0 1px,transparent 1px 2px)"></div>
<svg class="a" style="left:292px;top:746px" width="10" height="10"><rect x="0.5" y="0.5" width="8" height="8" fill="#fff" stroke="#8a8a8a"/><path d="M2,4.5 H7 M4.5,2 V7" stroke="#000" stroke-width="1.2"/></svg>
<svg class="a" style="left:308px;top:743px" width="21" height="17"><rect x="1" y="1.2" width="13.8" height="1.5" fill="#2e2e2e"/><rect x="0" y="3.5" width="15.8" height="6.9" fill="#626262"/><text x="7.6" y="9.3" font-family='"Liberation Sans", sans-serif' font-size="7" font-weight="bold" fill="#fff" text-anchor="middle" textLength="11.5" lengthAdjust="spacingAndGlyphs">Dim</text><rect x="1" y="11.6" width="10.8" height="1.6" fill="#2e2e2e"/><circle cx="16.5" cy="12.3" r="3.9" fill="#5cc04c"/></svg>
<div class="a" style="left:329.5px;top:739.6px;font-size:13.85px;line-height:22px;color:#1a1a1a;-webkit-text-stroke:0.2px #1a1a1a;transform:scaleX(0.99);transform-origin:0 0">A17&nbsp;&nbsp;Dimmer Extension (Dimmer Extension) (Schaltschrank R01 P01)</div>
<div class="a" style="left:297px;top:772px;width:12px;height:1px;background:repeating-linear-gradient(90deg,#808080 0 1px,transparent 1px 2px)"></div>
<svg class="a" style="left:308px;top:765px" width="21" height="17"><rect x="1" y="1.2" width="13.8" height="1.5" fill="#2e2e2e"/><rect x="0" y="3.5" width="15.8" height="6.9" fill="#626262"/><text x="7.6" y="9.3" font-family='"Liberation Sans", sans-serif' font-size="7" font-weight="bold" fill="#fff" text-anchor="middle" textLength="11.5" lengthAdjust="spacingAndGlyphs">1-W</text><rect x="1" y="11.6" width="10.8" height="1.6" fill="#2e2e2e"/><circle cx="16.5" cy="12.3" r="3.9" fill="#5cc04c"/></svg>
<div class="a" style="left:329.5px;top:761.6px;font-size:13.85px;line-height:22px;color:#1a1a1a;-webkit-text-stroke:0.2px #1a1a1a;transform:scaleX(0.999);transform-origin:0 0">A22&nbsp;&nbsp;1-Wire Extension (1-Wire Extension) (Schaltschrank)</div>
<div class="a" style="left:301px;top:794px;width:8px;height:1px;background:repeating-linear-gradient(90deg,#808080 0 1px,transparent 1px 2px)"></div>
<svg class="a" style="left:292px;top:790px" width="10" height="10"><rect x="0.5" y="0.5" width="8" height="8" fill="#fff" stroke="#8a8a8a"/><path d="M2,4.5 H7 M4.5,2 V7" stroke="#000" stroke-width="1.2"/></svg>
<svg class="a" style="left:308px;top:787px" width="21" height="17"><rect x="1" y="1.2" width="13.8" height="1.5" fill="#2e2e2e"/><rect x="0" y="3.5" width="15.8" height="6.9" fill="#626262"/><text x="7.6" y="9.3" font-family='"Liberation Sans", sans-serif' font-size="7" font-weight="bold" fill="#fff" text-anchor="middle" textLength="11.5" lengthAdjust="spacingAndGlyphs">Tree</text><rect x="1" y="11.6" width="10.8" height="1.6" fill="#2e2e2e"/><circle cx="16.5" cy="12.3" r="3.9" fill="#5cc04c"/></svg>
<div class="a" style="left:329.5px;top:783.6px;font-size:13.85px;line-height:22px;color:#1a1a1a;-webkit-text-stroke:0.2px #1a1a1a;transform:scaleX(0.951);transform-origin:0 0">A23&nbsp;&nbsp;Tree Extension (Tree Extension) (Schaltschrank R01 P01)</div>
</div></div>
<svg class="a" style="left:564px;top:82px" width="18" height="16"><rect x="0" y="0" width="16" height="15.5" rx="1" fill="#707070"/><rect x="16" y="0" width="2" height="15.5" fill="#fff"/><rect x="3" y="6.5" width="10" height="3" fill="#fff"/></svg>
<div class="a" style="left:607px;top:36px;width:661px;height:773px;background:#f3f3f3"></div>
<div class="a" style="left:607px;top:55px;width:661px;height:2px;background:#e6e6f0"></div>
<svg class="a" style="left:607px;top:38px" width="110" height="22"><polygon points="5,19.5 23,2 97,2 97,19.5" fill="#c6d6f2"/><polygon points="4,20 23,1.5 24,2.5 6,20" fill="#e8eef8"/></svg>
<div class="a" style="left:638px;top:40px;width:50px;height:17.5px;background:#2d3038"></div>
<div class="a" style="left:686px;top:42px;width:14px;height:16.5px;background:#2d3038"></div>
<div class="a" style="left:641px;top:40px;font-size:11.5px;font-weight:bold;color:#0a0a0a;line-height:16px">Federle</div>
<svg class="a" style="left:691.5px;top:44px" width="10" height="10"><path d="M1,1 L8.5,8.5 M8.5,1 L1,8.5" stroke="#0a0a0a" stroke-width="1.4"/></svg>
<div class="a" style="left:608px;top:57px;width:660px;height:752px;background:#c6d6f2"></div>
<div class="a" style="left:610px;top:58px;width:658px;height:751px;background:#3c4048"></div>
<div class="a" style="left:611px;top:59px;width:657px;height:750px;background:#606268"></div>
<div class="a" style="left:612px;top:60px;width:656px;height:749px;background:#8e8e8c"></div>
<div class="a" style="left:613px;top:61px;width:655px;height:748px;background:#fff"></div>
<svg class="a" style="left:0;top:0" width="1268" height="809"><defs><clipPath id="cv"><rect x="613" y="61" width="655" height="748"/></clipPath></defs><g clip-path="url(#cv)"><circle cx="651.3" cy="112.5" r="9.3" fill="#c2c2c2"/><circle cx="651.3" cy="414.6" r="9.3" fill="#c2c2c2"/><line x1="689.5" y1="61" x2="689.5" y2="787" stroke="#b8b8b8" stroke-dasharray="1,1"/><line x1="689" y1="786.5" x2="1268" y2="786.5" stroke="#c8c8c8" stroke-dasharray="1,1"/><text x="690.5" y="784" font-family='"Liberation Sans", sans-serif' font-size="12" font-weight="bold" fill="#111" textLength="77.7" lengthAdjust="spacingAndGlyphs">Federle/Zentral</text><text x="789" y="784" font-family='"Liberation Sans", sans-serif' font-size="12" font-weight="bold" fill="#111" textLength="96" lengthAdjust="spacingAndGlyphs">Zentral Beleuchtung</text><path d="M709.4499999999999,278.2 H843.8 V291.5 H709.4499999999999 A6.650000000000006,6.650000000000006 0 0 1 709.4499999999999,278.2 Z" fill="#fff" stroke="#333" stroke-width="1"/><rect x="715.8" y="279.7" width="95.90000000000009" height="10.300000000000011" fill="#e6e6e6"/><line x1="811.7" y1="278.2" x2="811.7" y2="291.5" stroke="#333"/><rect x="708.5" y="281.85" width="1.6" height="1.5" fill="#222"/><rect x="708.5" y="284.05" width="1.6" height="3.6" fill="#222"/><text x="722.8" y="287.85" font-family='"Liberation Sans", sans-serif' font-size="8.5" font-weight="normal" fill="#333" text-anchor="start" textLength="82" lengthAdjust="spacingAndGlyphs">Impuls  Sonnenunter ...</text><text x="827.75" y="289.05" font-family='"Liberation Sans", sans-serif' font-size="11.5" font-weight="bold" fill="#2a2a2a" text-anchor="middle">T</text><circle cx="847.3" cy="284.85" r="4" fill="#5cbf4c"/><polyline points="850.5,285.5 907.5,285.5" fill="none" stroke="#333" stroke-width="1"/><text x="885" y="283" font-family='"Liberation Sans", sans-serif' font-size="8.5" fill="#000" stroke="#000" stroke-width="0.2" textLength="13" lengthAdjust="spacingAndGlyphs">Aus</text><rect x="907.3" y="259.2" width="90.40000000000009" height="44.5" fill="#fff" stroke="#6cbf5e" stroke-width="1"/><rect x="907.3" y="259.2" width="90.40000000000009" height="18.5" fill="#62c154"/><text x="912.3" y="272.5" font-family='"Liberation Sans", sans-serif' font-size="11" font-weight="bold" fill="#e9f7df" text-anchor="start" textLength="57.5" lengthAdjust="spacingAndGlyphs">Verzöger...</text><circle cx="988.2" cy="268.9" r="6" fill="#fff"/><rect x="987.3000000000001" y="265.9" width="1.8" height="1.6" fill="#222"/><rect x="987.3000000000001" y="268.09999999999997" width="1.8" height="4" fill="#222"/><path d="M900.8,281.2 H907.3 V288.8 H900.8 L903.8,285 Z" fill="#f2b25a"/><path d="M900.8,293.2 H907.3 V300.8 H900.8 L903.8,297 Z" fill="#cfcfcf"/><text x="917.5" y="289.5" font-family='"Liberation Sans", sans-serif' font-size="11.5" font-weight="normal" fill="#111" text-anchor="start">Tr</text><text x="981" y="289.5" font-family='"Liberation Sans", sans-serif' font-size="11.5" font-weight="normal" fill="#111" text-anchor="start">Q</text><circle cx="919" cy="297" r="4.7" fill="#9a9a9a"/><path d="M916.2,297 H921.8 M919,294.2 V299.8" stroke="#fff" stroke-width="1.3"/><circle cx="1000.5" cy="284.8" r="4" fill="#5cbf4c"/><polyline points="1003.5,285.5 1054.5,285.5 1054.5,310.5 1109.5,310.5" fill="none" stroke="#333" stroke-width="1"/><text x="1007" y="283" font-family='"Liberation Sans", sans-serif' font-size="8.5" fill="#000" stroke="#000" stroke-width="0.2" textLength="13" lengthAdjust="spacingAndGlyphs">Aus</text><rect x="1112.4" y="259.5" width="187.5999999999999" height="107.30000000000001" fill="#fff" stroke="#6cbf5e" stroke-width="1"/><rect x="1112.4" y="259.5" width="187.5999999999999" height="18.2" fill="#62c154"/><text x="1117.4" y="272.8" font-family='"Liberation Sans", sans-serif' font-size="11" font-weight="bold" fill="#e9f7df" text-anchor="start" textLength="106.8" lengthAdjust="spacingAndGlyphs">Beschattung Zentral</text><circle cx="1290.5" cy="269.2" r="6" fill="#fff"/><rect x="1289.6" y="266.2" width="1.8" height="1.6" fill="#222"/><rect x="1289.6" y="268.4" width="1.8" height="4" fill="#222"/><rect x="1113" y="277.7" width="160" height="13" fill="#e8e8e8"/><text x="1202.5" y="289.3" font-family='"Liberation Sans", sans-serif' font-size="11" font-weight="normal" fill="#333" text-anchor="middle" textLength="99.5" lengthAdjust="spacingAndGlyphs">Beschattung Zentral</text><path d="M1105.9,293.2 H1112.4 V300.8 H1105.9 L1108.9,297 Z" fill="#f2b25a"/><text x="1120.5" y="301" font-family='"Liberation Sans", sans-serif' font-size="11.5" font-weight="normal" fill="#111" text-anchor="start">Cu</text><text x="1089" y="295.5" font-family='"Liberation Sans", sans-serif' font-size="8.5" fill="#000" stroke="#000" stroke-width="0.2" textLength="13" lengthAdjust="spacingAndGlyphs">Aus</text><path d="M1105.9,306.2 H1112.4 V313.8 H1105.9 L1108.9,310 Z" fill="#f2b25a"/><text x="1120.5" y="314" font-family='"Liberation Sans", sans-serif' font-size="11.5" font-weight="normal" fill="#111" text-anchor="start">Cd</text><text x="1089" y="308.5" font-family='"Liberation Sans", sans-serif' font-size="8.5" fill="#000" stroke="#000" stroke-width="0.2" textLength="13" lengthAdjust="spacingAndGlyphs">Aus</text><path d="M1105.9,319.2 H1112.4 V326.8 H1105.9 L1108.9,323 Z" fill="#f2b25a"/><text x="1120.5" y="327" font-family='"Liberation Sans", sans-serif' font-size="11.5" font-weight="normal" fill="#111" text-anchor="start">AR</text><text x="1089" y="321.5" font-family='"Liberation Sans", sans-serif' font-size="8.5" fill="#000" stroke="#000" stroke-width="0.2" textLength="13" lengthAdjust="spacingAndGlyphs">Aus</text><path d="M1105.9,332.2 H1112.4 V339.8 H1105.9 L1108.9,336 Z" fill="#f2b25a"/><text x="1120.5" y="340" font-family='"Liberation Sans", sans-serif' font-size="11.5" font-weight="normal" fill="#111" text-anchor="start">Sp</text><text x="1089" y="334.5" font-family='"Liberation Sans", sans-serif' font-size="8.5" fill="#000" stroke="#000" stroke-width="0.2" textLength="13" lengthAdjust="spacingAndGlyphs">Aus</text><path d="M1105.9,344.7 H1112.4 V352.3 H1105.9 L1108.9,348.5 Z" fill="#cfcfcf"/><circle cx="1123.5" cy="348.5" r="4.7" fill="#9a9a9a"/><path d="M1120.7,348.5 H1126.3 M1123.5,345.7 V351.3" stroke="#fff" stroke-width="1.3"/><text x="1215" y="301" font-family='"Liberation Sans", sans-serif' font-size="11" font-weight="normal" fill="#7a7a7a" text-anchor="middle">Zentral</text><text x="1215" y="314" font-family='"Liberation Sans", sans-serif' font-size="11" font-weight="normal" fill="#7a7a7a" text-anchor="middle">Beschattung</text><rect x="1113" y="355.6" width="160" height="11" fill="#d6efd0"/><text x="1120.7" y="364.8" font-family='"Liberation Sans", sans-serif' font-size="11" font-weight="normal" fill="#333" text-anchor="start" textLength="132.9" lengthAdjust="spacingAndGlyphs">18/27 Objekten zugeordnet</text><line x1="1112.4" y1="366.8" x2="1268" y2="366.8" stroke="#6cbf5e"/><path d="M1112.4,367.7 H1246.5 A6.5,6.5 0 0 1 1246.5,380.7 H1112.4 Z" fill="#fff" stroke="#333" stroke-width="1"/><rect x="1145.4" y="369.2" width="95.59999999999991" height="10.0" fill="#e6e6e6"/><line x1="1144.4" y1="367.7" x2="1144.4" y2="380.7" stroke="#333"/><rect x="1244.7" y="371.2" width="1.6" height="1.5" fill="#222"/><rect x="1244.7" y="373.4" width="1.6" height="3.6" fill="#222"/><path d="M1125.0,370.4 H1133.5 V378.4 H1125.0 M1125.0,370.4 V372.4 M1125.0,378.4 V376.4" fill="none" stroke="#333" stroke-width="1.4"/><path d="M1123.5,374.4 H1129.0" stroke="#333" stroke-width="1.4"/><text x="1151.4" y="377.2" font-family='"Liberation Sans", sans-serif' font-size="8.5" font-weight="normal" fill="#333" text-anchor="start" textLength="72" lengthAdjust="spacingAndGlyphs">Sp:  Beschattung  Ze...</text><path d="M1105.9,370.4 H1112.4 V378.0 H1105.9 L1108.9,374.2 Z" fill="#cfcfcf"/><polyline points="1080.5,336.5 1080.5,374.5 1108.5,374.5" fill="none" stroke="#333" stroke-width="1"/><path d="M914.3,316.3 H1048.3 V329.3 H914.3 A6.5,6.5 0 0 1 914.3,316.3 Z" fill="#fff" stroke="#333" stroke-width="1"/><rect x="920.8" y="317.8" width="95.80000000000007" height="10.0" fill="#e6e6e6"/><line x1="1016.6" y1="316.3" x2="1016.6" y2="329.3" stroke="#333"/><rect x="913.5" y="319.8" width="1.6" height="1.5" fill="#222"/><rect x="913.5" y="322.0" width="1.6" height="3.6" fill="#222"/><text x="927.8" y="326.8" font-family='"Liberation Sans", sans-serif' font-size="11" font-weight="bold" fill="#3c4048" text-anchor="start" textLength="78.6" lengthAdjust="spacingAndGlyphs">Haus verlassen</text><text x="1032.45" y="327.0" font-family='"Liberation Sans", sans-serif' font-size="11.5" font-weight="bold" fill="#2a2a2a" text-anchor="middle">M</text><circle cx="1051.8" cy="322.8" r="4" fill="#5cbf4c"/><path d="M914.3,329.3 H1048.3 V342.3 H914.3 A6.5,6.5 0 0 1 914.3,329.3 Z" fill="#fff" stroke="#333" stroke-width="1"/><rect x="920.8" y="330.8" width="95.80000000000007" height="10.0" fill="#e6e6e6"/><line x1="1016.6" y1="329.3" x2="1016.6" y2="342.3" stroke="#333"/><rect x="913.5" y="332.8" width="1.6" height="1.5" fill="#222"/><rect x="913.5" y="335.0" width="1.6" height="3.6" fill="#222"/><text x="927.8" y="339.8" font-family='"Liberation Sans", sans-serif' font-size="11" font-weight="bold" fill="#3c4048" text-anchor="start">Sturmschutz</text><text x="1032.45" y="340.0" font-family='"Liberation Sans", sans-serif' font-size="11.5" font-weight="bold" fill="#2a2a2a" text-anchor="middle">B</text><circle cx="1051.8" cy="335.8" r="4" fill="#5cbf4c"/><polyline points="1052.5,323.5 1109.5,323.5" fill="none" stroke="#333" stroke-width="1"/><polyline points="1052.5,336.5 1109.5,336.5" fill="none" stroke="#333" stroke-width="1"/><circle cx="1080.5" cy="336.5" r="1.6" fill="#333"/><rect x="1010.2" y="399.2" width="179.79999999999995" height="96.10000000000002" fill="#fff" stroke="#6cbf5e" stroke-width="1"/><rect x="1010.2" y="399.2" width="179.79999999999995" height="19.5" fill="#62c154"/><text x="1015.2" y="412.5" font-family='"Liberation Sans", sans-serif' font-size="11" font-weight="bold" fill="#e9f7df" text-anchor="start" textLength="66.3" lengthAdjust="spacingAndGlyphs">Licht Zentral</text><circle cx="1180.5" cy="408.9" r="6" fill="#fff"/><rect x="1179.6" y="405.9" width="1.8" height="1.6" fill="#222"/><rect x="1179.6" y="408.09999999999997" width="1.8" height="4" fill="#222"/><rect x="1010.7" y="418.7" width="178.8" height="13.2" fill="#e8e8e8"/><text x="1099" y="429.5" font-family='"Liberation Sans", sans-serif' font-size="11" font-weight="normal" fill="#333" text-anchor="middle">Licht Zentral</text><path d="M1003.7,434.7 H1010.2 V442.3 H1003.7 L1006.7,438.5 Z" fill="#f2b25a"/><text x="1018" y="442.5" font-family='"Liberation Sans", sans-serif' font-size="11.5" font-weight="normal" fill="#111" text-anchor="start">+</text><text x="987" y="436.5" font-family='"Liberation Sans", sans-serif' font-size="8.5" fill="#000" stroke="#000" stroke-width="0.2" textLength="13" lengthAdjust="spacingAndGlyphs">Aus</text><path d="M1003.7,447.5 H1010.2 V455.1 H1003.7 L1006.7,451.3 Z" fill="#f2b25a"/><text x="1018" y="455.3" font-family='"Liberation Sans", sans-serif' font-size="11.5" font-weight="normal" fill="#111" text-anchor="start">R</text><text x="987" y="449.3" font-family='"Liberation Sans", sans-serif' font-size="8.5" fill="#000" stroke="#000" stroke-width="0.2" textLength="13" lengthAdjust="spacingAndGlyphs">Aus</text><path d="M1003.7,460.59999999999997 H1010.2 V468.2 H1003.7 L1006.7,464.4 Z" fill="#f2b25a"/><text x="1018" y="468.4" font-family='"Liberation Sans", sans-serif' font-size="11.5" font-weight="normal" fill="#111" text-anchor="start">A</text><text x="987" y="462.4" font-family='"Liberation Sans", sans-serif' font-size="8.5" fill="#000" stroke="#000" stroke-width="0.2" textLength="13" lengthAdjust="spacingAndGlyphs">Aus</text><path d="M1003.7,473.0 H1010.2 V480.6 H1003.7 L1006.7,476.8 Z" fill="#cfcfcf"/><circle cx="1020.5" cy="476.8" r="4.7" fill="#9a9a9a"/><path d="M1017.7,476.8 H1023.3 M1020.5,474.0 V479.6" stroke="#fff" stroke-width="1.3"/><text x="1108.6" y="442.5" font-family='"Liberation Sans", sans-serif' font-size="11" font-weight="normal" fill="#7a7a7a" text-anchor="middle">Zentral</text><text x="1110" y="455.3" font-family='"Liberation Sans", sans-serif' font-size="11" font-weight="normal" fill="#7a7a7a" text-anchor="middle">Beleuchtung</text><rect x="1010.7" y="483" width="178.8" height="11.8" fill="#d6efd0"/><text x="1018" y="492.8" font-family='"Liberation Sans", sans-serif' font-size="11" font-weight="normal" fill="#333" text-anchor="start" textLength="132.9" lengthAdjust="spacingAndGlyphs">28/45 Objekten zugeordnet</text><circle cx="1178.3" cy="489.2" r="3.6" fill="#fff" stroke="#8a8a8a" stroke-width="2"/><path d="M1173.3,489.2 H1183.3 M1178.3,484.2 V494.2" stroke="#8a8a8a" stroke-width="1.3"/><rect x="1176.3" y="487.2" width="4" height="4" fill="#fff"/><path d="M812.1999999999999,444.6 H946.6 V457.4 H812.1999999999999 A6.399999999999977,6.399999999999977 0 0 1 812.1999999999999,444.6 Z" fill="#fff" stroke="#333" stroke-width="1"/><rect x="818.8" y="446.1" width="95.5" height="9.799999999999955" fill="#e6e6e6"/><line x1="914.3" y1="444.6" x2="914.3" y2="457.4" stroke="#333"/><rect x="811.5" y="448.0" width="1.6" height="1.5" fill="#222"/><rect x="811.5" y="450.2" width="1.6" height="3.6" fill="#222"/><text x="825.8" y="455.0" font-family='"Liberation Sans", sans-serif' font-size="11" font-weight="bold" fill="#3c4048" text-anchor="start" textLength="62.4" lengthAdjust="spacingAndGlyphs">Windfang I4</text><text x="930.45" y="455.2" font-family='"Liberation Sans", sans-serif' font-size="11.5" font-weight="bold" fill="#2a2a2a" text-anchor="middle">I4</text><circle cx="950.1" cy="451.0" r="4" fill="#5cbf4c"/><path d="M812.25,457.4 H946.6 V470.3 H812.25 A6.450000000000017,6.450000000000017 0 0 1 812.25,457.4 Z" fill="#fff" stroke="#333" stroke-width="1"/><rect x="818.8" y="458.9" width="95.5" height="9.900000000000034" fill="#e6e6e6"/><line x1="914.3" y1="457.4" x2="914.3" y2="470.3" stroke="#333"/><rect x="811.5" y="460.85" width="1.6" height="1.5" fill="#222"/><rect x="811.5" y="463.05" width="1.6" height="3.6" fill="#222"/><text x="825.8" y="467.85" font-family='"Liberation Sans", sans-serif' font-size="11" font-weight="bold" fill="#3c4048" text-anchor="start" textLength="78.6" lengthAdjust="spacingAndGlyphs">Haus verlassen</text><text x="930.45" y="468.05" font-family='"Liberation Sans", sans-serif' font-size="11.5" font-weight="bold" fill="#2a2a2a" text-anchor="middle">M</text><circle cx="950.1" cy="463.85" r="4" fill="#5cbf4c"/><polyline points="954.5,451.5 1005.5,451.5" fill="none" stroke="#333" stroke-width="1"/><polyline points="954.5,464.5 978.5,464.5 978.5,451.5" fill="none" stroke="#333" stroke-width="1"/><circle cx="978.5" cy="451.5" r="1.6" fill="#333"/><path d="M812.3,495.5 H946.6 V508.5 H812.3 A6.5,6.5 0 0 1 812.3,495.5 Z" fill="#fff" stroke="#333" stroke-width="1"/><rect x="818.8" y="497.0" width="95.5" height="10.0" fill="#e6e6e6"/><line x1="914.3" y1="495.5" x2="914.3" y2="508.5" stroke="#333"/><rect x="811.5" y="499.0" width="1.6" height="1.5" fill="#222"/><rect x="811.5" y="501.2" width="1.6" height="3.6" fill="#222"/><text x="825.8" y="505.0" font-family='"Liberation Sans", sans-serif' font-size="8.5" font-weight="normal" fill="#333" text-anchor="start" textLength="82" lengthAdjust="spacingAndGlyphs">Q1:  Brandmeldezen ...</text><path d="M933,498.1 H924 V506.5 H933 M933,498.1 V500.1 M933,506.5 V504.5" fill="none" stroke="#333" stroke-width="1.5"/><path d="M929.5,502.3 H935" stroke="#333" stroke-width="1.5"/><circle cx="950.1" cy="502.0" r="4" fill="#d0d0d0"/><path d="M812.3,508.5 H946.6 V521.5 H812.3 A6.5,6.5 0 0 1 812.3,508.5 Z" fill="#fff" stroke="#333" stroke-width="1"/><rect x="818.8" y="510.0" width="95.5" height="10.0" fill="#e6e6e6"/><line x1="914.3" y1="508.5" x2="914.3" y2="521.5" stroke="#333"/><rect x="811.5" y="512.0" width="1.6" height="1.5" fill="#222"/><rect x="811.5" y="514.2" width="1.6" height="3.6" fill="#222"/><text x="825.8" y="519.0" font-family='"Liberation Sans", sans-serif' font-size="11" font-weight="bold" fill="#3c4048" text-anchor="start" textLength="73" lengthAdjust="spacingAndGlyphs">Haus betreten</text><text x="930.45" y="519.2" font-family='"Liberation Sans", sans-serif' font-size="11.5" font-weight="bold" fill="#2a2a2a" text-anchor="middle">M</text><circle cx="950.1" cy="515.0" r="4" fill="#5cbf4c"/><path d="M812.25,521.5 H946.6 V534.4 H812.25 A6.449999999999989,6.449999999999989 0 0 1 812.25,521.5 Z" fill="#fff" stroke="#333" stroke-width="1"/><rect x="818.8" y="523.0" width="95.5" height="9.899999999999977" fill="#e6e6e6"/><line x1="914.3" y1="521.5" x2="914.3" y2="534.4" stroke="#333"/><rect x="811.5" y="524.95" width="1.6" height="1.5" fill="#222"/><rect x="811.5" y="527.1500000000001" width="1.6" height="3.6" fill="#222"/><text x="825.8" y="530.95" font-family='"Liberation Sans", sans-serif' font-size="8.5" font-weight="normal" fill="#333" text-anchor="start" textLength="56" lengthAdjust="spacingAndGlyphs">Q1: Alarmanlage</text><path d="M933,523.8 H924 V532.2 H933 M933,523.8 V525.8 M933,532.2 V530.2" fill="none" stroke="#333" stroke-width="1.5"/><path d="M929.5,528 H935" stroke="#333" stroke-width="1.5"/><circle cx="950.1" cy="527.95" r="4" fill="#d0d0d0"/><polyline points="954.5,502.5 978.5,502.5 978.5,528.5 954.5,528.5" fill="none" stroke="#333" stroke-width="1"/><polyline points="954.5,515.5 1005.5,515.5" fill="none" stroke="#333" stroke-width="1"/><circle cx="978.5" cy="515.5" r="1.6" fill="#333"/><path d="M1010.1,508.3 H1144.9 A6.599999999999994,6.599999999999994 0 0 1 1144.9,521.5 H1010.1 Z" fill="#fff" stroke="#333" stroke-width="1"/><rect x="1043.3" y="509.8" width="96.20000000000005" height="10.199999999999989" fill="#e6e6e6"/><line x1="1042.3" y1="508.3" x2="1042.3" y2="521.5" stroke="#333"/><rect x="1143.2" y="511.9" width="1.6" height="1.5" fill="#222"/><rect x="1143.2" y="514.1" width="1.6" height="3.6" fill="#222"/><text x="1026.2" y="519.1" font-family='"Liberation Sans", sans-serif' font-size="12" font-weight="bold" fill="#2a2a2a" text-anchor="middle">Q1</text><text x="1049.3" y="517.9" font-family='"Liberation Sans", sans-serif' font-size="8.5" font-weight="normal" fill="#333" text-anchor="start" textLength="80" lengthAdjust="spacingAndGlyphs">Loxone  Music  Serve...</text><path d="M1003.6,511.2 H1010.1 V518.8 H1003.6 L1006.6,515 Z" fill="#f2b25a"/><path d="M658.45,566.3 H792.4 V579.2 H658.45 A6.4500000000000455,6.4500000000000455 0 0 1 658.45,566.3 Z" fill="#fff" stroke="#333" stroke-width="1"/><rect x="665" y="567.8" width="95.5" height="9.900000000000091" fill="#e6e6e6"/><line x1="760.5" y1="566.3" x2="760.5" y2="579.2" stroke="#333"/><rect x="657.7" y="569.75" width="1.6" height="1.5" fill="#222"/><rect x="657.7" y="571.95" width="1.6" height="3.6" fill="#222"/><text x="672" y="575.75" font-family='"Liberation Sans", sans-serif' font-size="8.5" font-weight="normal" fill="#333" text-anchor="start" textLength="68" lengthAdjust="spacingAndGlyphs">Automatikbesch ...</text><text x="776.45" y="576.95" font-family='"Liberation Sans", sans-serif' font-size="11.5" font-weight="bold" fill="#2a2a2a" text-anchor="middle">VI</text><circle cx="795.9" cy="572.75" r="4" fill="#5cbf4c"/><polyline points="800.5,572.5 824.5,572.5 824.5,751.5 800.5,751.5" fill="none" stroke="#333" stroke-width="1"/><path d="M812.0,559.5 H946.7 V572.5 H812.0 A6.5,6.5 0 0 1 812.0,559.5 Z" fill="#fff" stroke="#333" stroke-width="1"/><rect x="818.5" y="561.0" width="96.20000000000005" height="10.0" fill="#e6e6e6"/><line x1="914.7" y1="559.5" x2="914.7" y2="572.5" stroke="#333"/><rect x="811.2" y="563.0" width="1.6" height="1.5" fill="#222"/><rect x="811.2" y="565.2" width="1.6" height="3.6" fill="#222"/><text x="825.5" y="570.0" font-family='"Liberation Sans", sans-serif' font-size="11" font-weight="bold" fill="#3c4048" text-anchor="start" textLength="78.6" lengthAdjust="spacingAndGlyphs">Haus verlassen</text><text x="930.7" y="570.2" font-family='"Liberation Sans", sans-serif' font-size="11.5" font-weight="bold" fill="#2a2a2a" text-anchor="middle">M</text><circle cx="950.2" cy="566.0" r="4" fill="#5cbf4c"/><polyline points="953.5,566.5 1005.5,566.5" fill="none" stroke="#333" stroke-width="1"/><path d="M1010.1,559.7 H1145.15 A6.349999999999966,6.349999999999966 0 0 1 1145.15,572.4 H1010.1 Z" fill="#fff" stroke="#333" stroke-width="1"/><rect x="1043.3" y="561.2" width="96.20000000000005" height="9.699999999999932" fill="#e6e6e6"/><line x1="1042.3" y1="559.7" x2="1042.3" y2="572.4" stroke="#333"/><rect x="1143.2" y="563.05" width="1.6" height="1.5" fill="#222"/><rect x="1143.2" y="565.25" width="1.6" height="3.6" fill="#222"/><text x="1026.2" y="570.25" font-family='"Liberation Sans", sans-serif' font-size="12" font-weight="bold" fill="#2a2a2a" text-anchor="middle">Q2</text><text x="1049.3" y="569.05" font-family='"Liberation Sans", sans-serif' font-size="8.5" font-weight="normal" fill="#333" text-anchor="start" textLength="80" lengthAdjust="spacingAndGlyphs">Loxone  Music  Serve...</text><path d="M1003.6,562.2 H1010.1 V569.8 H1003.6 L1006.6,566 Z" fill="#f2b25a"/><path d="M812.0,585 H946.7 V598 H812.0 A6.5,6.5 0 0 1 812.0,585 Z" fill="#fff" stroke="#333" stroke-width="1"/><rect x="818.5" y="586.5" width="96.20000000000005" height="10" fill="#e6e6e6"/><line x1="914.7" y1="585" x2="914.7" y2="598" stroke="#333"/><rect x="811.2" y="588.5" width="1.6" height="1.5" fill="#222"/><rect x="811.2" y="590.7" width="1.6" height="3.6" fill="#222"/><text x="825.5" y="595.5" font-family='"Liberation Sans", sans-serif' font-size="11" font-weight="bold" fill="#3c4048" text-anchor="start" textLength="78.6" lengthAdjust="spacingAndGlyphs">Haus verlassen</text><text x="930.7" y="595.7" font-family='"Liberation Sans", sans-serif' font-size="11.5" font-weight="bold" fill="#2a2a2a" text-anchor="middle">M</text><circle cx="950.2" cy="591.5" r="4" fill="#5cbf4c"/><polyline points="953.5,591.5 1005.5,591.5" fill="none" stroke="#333" stroke-width="1"/><path d="M1010.1,585.1 H1145.0 A6.5,6.5 0 0 1 1145.0,598.1 H1010.1 Z" fill="#fff" stroke="#333" stroke-width="1"/><rect x="1043.3" y="586.6" width="96.20000000000005" height="10.0" fill="#e6e6e6"/><line x1="1042.3" y1="585.1" x2="1042.3" y2="598.1" stroke="#333"/><rect x="1143.2" y="588.6" width="1.6" height="1.5" fill="#222"/><rect x="1143.2" y="590.8000000000001" width="1.6" height="3.6" fill="#222"/><text x="1026.2" y="595.8000000000001" font-family='"Liberation Sans", sans-serif' font-size="12" font-weight="bold" fill="#2a2a2a" text-anchor="middle">M</text><text x="1049.3" y="594.6" font-family='"Liberation Sans", sans-serif' font-size="8.5" font-weight="normal" fill="#333" text-anchor="start" textLength="64" lengthAdjust="spacingAndGlyphs">Raumregler Reset</text><path d="M1003.6,587.7 H1010.1 V595.3 H1003.6 L1006.6,591.5 Z" fill="#f2b25a"/><rect x="703.2" y="611.2" width="89.5" height="32.39999999999998" fill="#fff" stroke="#6cbf5e" stroke-width="1"/><rect x="703.2" y="611.2" width="89.5" height="19" fill="#62c154"/><text x="708.2" y="624.5" font-family='"Liberation Sans", sans-serif' font-size="11" font-weight="bold" fill="#e9f7df" text-anchor="start" textLength="55" lengthAdjust="spacingAndGlyphs">Impuls um</text><circle cx="783.2" cy="620.9000000000001" r="6" fill="#fff"/><rect x="782.3000000000001" y="617.9000000000001" width="1.8" height="1.6" fill="#222"/><rect x="782.3000000000001" y="620.1000000000001" width="1.8" height="4" fill="#222"/><path d="M696.7,633.2 H703.2 V640.8 H696.7 L699.7,637.0 Z" fill="#cfcfcf"/><circle cx="714.4" cy="637.0" r="4.7" fill="#9a9a9a"/><path d="M711.6,637.0 H717.1999999999999 M714.4,634.2 V639.8" stroke="#fff" stroke-width="1.3"/><text x="776" y="641.0" font-family='"Liberation Sans", sans-serif' font-size="11.5" font-weight="normal" fill="#111" text-anchor="start">Q</text><circle cx="796" cy="637.0" r="4" fill="#5cbf4c"/><polyline points="799.5,637.5 824.5,637.5" fill="none" stroke="#333" stroke-width="1"/><text x="803" y="635.0" font-family='"Liberation Sans", sans-serif' font-size="8.5" fill="#000" stroke="#000" stroke-width="0.2" textLength="13" lengthAdjust="spacingAndGlyphs">Aus</text><rect x="703.2" y="649.4" width="89.5" height="32.10000000000002" fill="#fff" stroke="#6cbf5e" stroke-width="1"/><rect x="703.2" y="649.4" width="89.5" height="19" fill="#62c154"/><text x="708.2" y="662.6999999999999" font-family='"Liberation Sans", sans-serif' font-size="11" font-weight="bold" fill="#e9f7df" text-anchor="start" textLength="55" lengthAdjust="spacingAndGlyphs">Impuls um</text><circle cx="783.2" cy="659.1" r="6" fill="#fff"/><rect x="782.3000000000001" y="656.1" width="1.8" height="1.6" fill="#222"/><rect x="782.3000000000001" y="658.3000000000001" width="1.8" height="4" fill="#222"/><path d="M696.7,671.1 H703.2 V678.6999999999999 H696.7 L699.7,674.9 Z" fill="#cfcfcf"/><circle cx="714.4" cy="674.9" r="4.7" fill="#9a9a9a"/><path d="M711.6,674.9 H717.1999999999999 M714.4,672.1 V677.6999999999999" stroke="#fff" stroke-width="1.3"/><text x="776" y="678.9" font-family='"Liberation Sans", sans-serif' font-size="11.5" font-weight="normal" fill="#111" text-anchor="start">Q</text><circle cx="796" cy="674.9" r="4" fill="#5cbf4c"/><polyline points="799.5,674.5 824.5,674.5" fill="none" stroke="#333" stroke-width="1"/><text x="803" y="672.9" font-family='"Liberation Sans", sans-serif' font-size="8.5" fill="#000" stroke="#000" stroke-width="0.2" textLength="13" lengthAdjust="spacingAndGlyphs">Aus</text><rect x="703.2" y="687.8" width="89.5" height="31.5" fill="#fff" stroke="#6cbf5e" stroke-width="1"/><rect x="703.2" y="687.8" width="89.5" height="19" fill="#62c154"/><text x="708.2" y="701.0999999999999" font-family='"Liberation Sans", sans-serif' font-size="11" font-weight="bold" fill="#e9f7df" text-anchor="start" textLength="55" lengthAdjust="spacingAndGlyphs">Impuls um</text><circle cx="783.2" cy="697.5" r="6" fill="#fff"/><rect x="782.3000000000001" y="694.5" width="1.8" height="1.6" fill="#222"/><rect x="782.3000000000001" y="696.7" width="1.8" height="4" fill="#222"/><path d="M696.7,708.9 H703.2 V716.4999999999999 H696.7 L699.7,712.6999999999999 Z" fill="#cfcfcf"/><circle cx="714.4" cy="712.6999999999999" r="4.7" fill="#9a9a9a"/><path d="M711.6,712.6999999999999 H717.1999999999999 M714.4,709.9 V715.4999999999999" stroke="#fff" stroke-width="1.3"/><text x="776" y="716.6999999999999" font-family='"Liberation Sans", sans-serif' font-size="11.5" font-weight="normal" fill="#111" text-anchor="start">Q</text><circle cx="796" cy="712.6999999999999" r="4" fill="#5cbf4c"/><polyline points="799.5,712.5 824.5,712.5" fill="none" stroke="#333" stroke-width="1"/><text x="803" y="710.6999999999999" font-family='"Liberation Sans", sans-serif' font-size="8.5" fill="#000" stroke="#000" stroke-width="0.2" textLength="13" lengthAdjust="spacingAndGlyphs">Aus</text><rect x="703.2" y="726" width="89.5" height="32" fill="#fff" stroke="#6cbf5e" stroke-width="1"/><rect x="703.2" y="726" width="89.5" height="19" fill="#62c154"/><text x="708.2" y="739.3" font-family='"Liberation Sans", sans-serif' font-size="11" font-weight="bold" fill="#e9f7df" text-anchor="start" textLength="55" lengthAdjust="spacingAndGlyphs">Impuls um</text><circle cx="783.2" cy="735.7" r="6" fill="#fff"/><rect x="782.3000000000001" y="732.7" width="1.8" height="1.6" fill="#222"/><rect x="782.3000000000001" y="734.9000000000001" width="1.8" height="4" fill="#222"/><path d="M696.7,747.6 H703.2 V755.1999999999999 H696.7 L699.7,751.4 Z" fill="#cfcfcf"/><circle cx="714.4" cy="751.4" r="4.7" fill="#9a9a9a"/><path d="M711.6,751.4 H717.1999999999999 M714.4,748.6 V754.1999999999999" stroke="#fff" stroke-width="1.3"/><text x="776" y="755.4" font-family='"Liberation Sans", sans-serif' font-size="11.5" font-weight="normal" fill="#111" text-anchor="start">Q</text><circle cx="796" cy="751.4" r="4" fill="#5cbf4c"/><polyline points="799.5,751.5 824.5,751.5" fill="none" stroke="#333" stroke-width="1"/><text x="803" y="749.4" font-family='"Liberation Sans", sans-serif' font-size="8.5" fill="#000" stroke="#000" stroke-width="0.2" textLength="13" lengthAdjust="spacingAndGlyphs">Aus</text><circle cx="824.5" cy="636.5" r="1.6" fill="#333"/><circle cx="824.5" cy="674.5" r="1.6" fill="#333"/><circle cx="824.5" cy="712.5" r="1.6" fill="#333"/><rect x="856.2" y="611.3" width="179.70000000000005" height="96.0" fill="#fff" stroke="#6cbf5e" stroke-width="1"/><rect x="856.2" y="611.3" width="179.70000000000005" height="18.5" fill="#62c154"/><text x="861.2" y="624.5999999999999" font-family='"Liberation Sans", sans-serif' font-size="11" font-weight="bold" fill="#e9f7df" text-anchor="start" textLength="145.8" lengthAdjust="spacingAndGlyphs">Beschattung Zentral ohne...</text><circle cx="1026.4" cy="621.0" r="6" fill="#fff"/><rect x="1025.5" y="618.0" width="1.8" height="1.6" fill="#222"/><rect x="1025.5" y="620.2" width="1.8" height="4" fill="#222"/><rect x="856.7" y="629.8" width="178.7" height="13.3" fill="#e8e8e8"/><text x="946" y="640.3" font-family='"Liberation Sans", sans-serif' font-size="11" font-weight="normal" fill="#333" text-anchor="middle" textLength="99.5" lengthAdjust="spacingAndGlyphs">Beschattung Zentral</text><path d="M849.7,645.6 H856.2 V653.1999999999999 H849.7 L852.7,649.4 Z" fill="#f2b25a"/><text x="864" y="653.4" font-family='"Liberation Sans", sans-serif' font-size="11.5" font-weight="normal" fill="#111" text-anchor="start">Cu</text><text x="833" y="647.4" font-family='"Liberation Sans", sans-serif' font-size="8.5" fill="#000" stroke="#000" stroke-width="0.2" textLength="13" lengthAdjust="spacingAndGlyphs">Aus</text><path d="M849.7,658.6 H856.2 V666.1999999999999 H849.7 L852.7,662.4 Z" fill="#f2b25a"/><text x="864" y="666.4" font-family='"Liberation Sans", sans-serif' font-size="11.5" font-weight="normal" fill="#111" text-anchor="start">Cd</text><text x="833" y="660.4" font-family='"Liberation Sans", sans-serif' font-size="8.5" fill="#000" stroke="#000" stroke-width="0.2" textLength="13" lengthAdjust="spacingAndGlyphs">Aus</text><path d="M849.7,671.6 H856.2 V679.1999999999999 H849.7 L852.7,675.4 Z" fill="#f2b25a"/><text x="864" y="679.4" font-family='"Liberation Sans", sans-serif' font-size="11.5" font-weight="normal" fill="#111" text-anchor="start">AR</text><text x="833" y="673.4" font-family='"Liberation Sans", sans-serif' font-size="8.5" fill="#000" stroke="#000" stroke-width="0.2" textLength="13" lengthAdjust="spacingAndGlyphs">Aus</text><path d="M849.7,684.5 H856.2 V692.0999999999999 H849.7 L852.7,688.3 Z" fill="#cfcfcf"/><circle cx="867.5" cy="688.3" r="4.7" fill="#9a9a9a"/><path d="M864.7,688.3 H870.3 M867.5,685.5 V691.0999999999999" stroke="#fff" stroke-width="1.3"/><text x="959.6" y="653.4" font-family='"Liberation Sans", sans-serif' font-size="11" font-weight="normal" fill="#7a7a7a" text-anchor="middle">Zentral</text><text x="959.6" y="666.4" font-family='"Liberation Sans", sans-serif' font-size="11" font-weight="normal" fill="#7a7a7a" text-anchor="middle">Beschattung</text><rect x="856.7" y="694.4" width="178.7" height="12.4" fill="#d6efd0"/><text x="864.5" y="704.2" font-family='"Liberation Sans", sans-serif' font-size="11" font-weight="normal" fill="#333" text-anchor="start" textLength="132.9" lengthAdjust="spacingAndGlyphs">14/27 Objekten zugeordnet</text><circle cx="1025" cy="700.8" r="3.6" fill="#fff" stroke="#8a8a8a" stroke-width="2"/><path d="M1020,700.8 H1030 M1025,695.8 V705.8" stroke="#8a8a8a" stroke-width="1.3"/><rect x="1023" y="698.8" width="4" height="4" fill="#fff"/><polyline points="824.5,675.5 852.5,675.5" fill="none" stroke="#333" stroke-width="1"/><path d="M812.1500000000001,771.4 H946.2 V783.3 H812.1500000000001 A5.949999999999989,5.949999999999989 0 0 1 812.1500000000001,771.4 Z" fill="#fff" stroke="#333" stroke-width="1"/><rect x="819.2" y="772.9" width="95.0" height="8.899999999999977" fill="#e6e6e6"/><line x1="914.2" y1="771.4" x2="914.2" y2="783.3" stroke="#333"/><rect x="811.9000000000001" y="774.3499999999999" width="1.6" height="1.5" fill="#222"/><rect x="811.9000000000001" y="776.55" width="1.6" height="3.6" fill="#222"/><text x="826.2" y="780.3499999999999" font-family='"Liberation Sans", sans-serif' font-size="8.5" font-weight="normal" fill="#333" text-anchor="start" textLength="52" lengthAdjust="spacingAndGlyphs">Helligkeit Haus</text><text x="930.2" y="781.55" font-family='"Liberation Sans", sans-serif' font-size="11.5" font-weight="bold" fill="#2a2a2a" text-anchor="middle">VI</text><circle cx="949.7" cy="777.3499999999999" r="4" fill="#5cbf4c"/><text x="955" y="775" font-family='"Liberation Sans", sans-serif' font-size="8.5" font-weight="normal" fill="#111" text-anchor="start" textLength="20" lengthAdjust="spacingAndGlyphs">60Lux</text></g></svg>
<div class="a" style="left:329px;top:739.5px;width:421px;height:21px;background:#fff;border:1px solid #222"></div>
<div class="a" style="left:330px;top:739px;font-size:13.85px;line-height:22px;color:#1e1e1e;transform:scaleX(0.969);transform-origin:0 0">A17&nbsp;&nbsp;Dimmer Extension (Dimmer Extension) (Schaltschrank R01 P01)</div>
</body></html>
